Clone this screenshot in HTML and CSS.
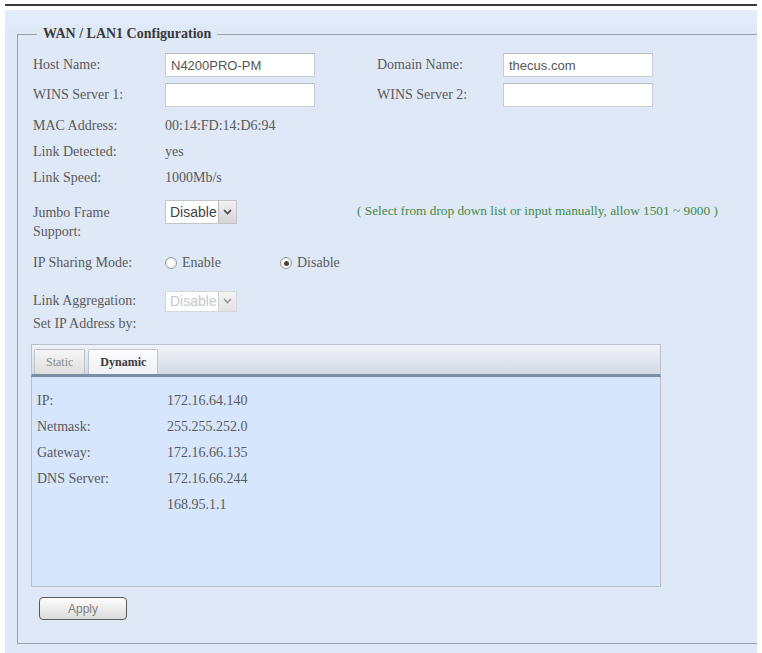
FILE: index.html
```html
<!DOCTYPE html>
<html lang="en">
<head>
    <meta charset="UTF-8">
    <title>WAN / LAN1 Configuration</title>
    <link rel="stylesheet" href="styles.css">
</head>
<body>
    <div class="frame">
        <div class="panel">
            <fieldset class="config">
                <legend>WAN / LAN1 Configuration</legend>

                <div class="row row-input">
                    <span class="label">Host Name:</span>
                    <span class="field"><input class="text" type="text" value="N4200PRO-PM"></span>
                    <span class="label label-right">Domain Name:</span>
                    <span class="field"><input class="text" type="text" value="thecus.com"></span>
                </div>
                <div class="row row-input">
                    <span class="label">WINS Server 1:</span>
                    <span class="field"><input class="text" type="text" value=""></span>
                    <span class="label label-right">WINS Server 2:</span>
                    <span class="field"><input class="text" type="text" value=""></span>
                </div>
                <div class="row row-mac">
                    <span class="label">MAC Address:</span>
                    <span class="value">00:14:FD:14:D6:94</span>
                </div>
                <div class="row">
                    <span class="label">Link Detected:</span>
                    <span class="value">yes</span>
                </div>
                <div class="row">
                    <span class="label">Link Speed:</span>
                    <span class="value">1000Mb/s</span>
                </div>
                <div class="row row-jumbo">
                    <span class="label label-wrap">Jumbo Frame Support:</span>
                    <span class="field field-combo">
                        <span class="combo">
                            <span class="combo-text">Disable</span>
                            <span class="combo-btn"><svg width="9" height="6" viewBox="0 0 9 6"><path d="M1 1 L4.5 4.5 L8 1" fill="none" stroke="#444" stroke-width="1.6"/></svg></span>
                        </span>
                    </span>
                    <span class="hint">( Select from drop down list or input manually, allow 1501 ~ 9000 )</span>
                </div>
                <div class="row row-radio">
                    <span class="label">IP Sharing Mode:</span>
                    <span class="field field-radio"><span class="radio"></span>Enable</span>
                    <span class="field"><span class="radio checked"></span>Disable</span>
                </div>
                <div class="row row-agg">
                    <span class="label">Link Aggregation:</span>
                    <span class="combo combo-disabled">
                        <span class="combo-text">Disable</span>
                        <span class="combo-btn"><svg width="9" height="6" viewBox="0 0 9 6"><path d="M1 1 L4.5 4.5 L8 1" fill="none" stroke="#999" stroke-width="1.6"/></svg></span>
                    </span>
                </div>
                <div class="row row-setip">
                    <span class="label">Set IP Address by:</span>
                </div>

                <div class="tabs">
                    <div class="tab-strip">
                        <span class="tab">Static</span>
                        <span class="tab active">Dynamic</span>
                    </div>
                    <div class="tab-body">
                        <div class="info-row"><span class="label">IP:</span><span class="value">172.16.64.140</span></div>
                        <div class="info-row"><span class="label">Netmask:</span><span class="value">255.255.252.0</span></div>
                        <div class="info-row"><span class="label">Gateway:</span><span class="value">172.16.66.135</span></div>
                        <div class="info-row"><span class="label">DNS Server:</span><span class="value">172.16.66.244</span></div>
                        <div class="info-row"><span class="label"></span><span class="value">168.95.1.1</span></div>
                    </div>
                </div>

                <button class="apply" type="button">Apply</button>
            </fieldset>
        </div>
    </div>
</body>
</html>
```

FILE: styles.css
```css
body {
    margin: 0;
    background-color: #fff;
    font-family: "Liberation Serif", "Times New Roman", serif;
    font-size: 14px;
    color: #5a5a5a;
}
.frame {
    margin: 4px 5px 0 5px;
    width: 752px;
    border-top: 2px solid #3c3c3c;
}
.panel {
    margin-top: 4px;
    height: 628px;
    padding-top: 16px;
    background: linear-gradient(to bottom, #e3eefa 0, #dfe8f7 20px);
}
.config {
    margin: 0 0 0 12px;
    padding: 11px 0 23px 15px;
    border: 1px solid #98a1ab;
    border-right: 0;
    min-width: 0;
}
.config legend {
    margin-left: 4px;
    padding: 0 6px;
    font-weight: bold;
    font-size: 14px;
    color: #3a3a3a;
    line-height: 16px;
}
.row {
    display: flex;
    align-items: center;
    height: 26px;
}
.row-input {
    height: 24px;
    margin-bottom: 6px;
}
.row-mac {
    margin-top: 0;
}
.label {
    width: 132px;
    flex: none;
}
.label-right {
    width: 126px;
}
.label-wrap {
    width: 118px;
    margin-right: 14px;
    line-height: 19px;
    align-self: flex-start;
    padding-top: 3px;
}
.field {
    width: 212px;
    flex: none;
    display: flex;
    align-items: center;
}
.text {
    box-sizing: border-box;
    width: 150px;
    height: 24px;
    margin: 0;
    padding: 0 5px;
    border: 1px solid #c9cdd2;
    border-top-color: #b9bdc2;
    background-color: #fff;
    font-family: "Liberation Sans", Arial, sans-serif;
    font-size: 13px;
    color: #555;
}
.row-jumbo {
    height: 44px;
    align-items: flex-start;
    margin-top: 9px;
}
.field-combo {
    width: 192px;
}
.combo {
    box-sizing: border-box;
    width: 72px;
    height: 24px;
    display: flex;
    border: 1px solid #c2c6cb;
    background-color: #fff;
    font-family: "Liberation Sans", Arial, sans-serif;
    font-size: 14px;
    color: #444;
}
.combo-text {
    width: 51px;
    padding-left: 4px;
    overflow: hidden;
    white-space: nowrap;
    line-height: 22px;
}
.combo-btn {
    width: 18px;
    display: flex;
    align-items: center;
    justify-content: center;
    border-left: 1px solid #bbb;
    background: linear-gradient(to bottom, #f2f2f2, #d4d4d4);
}
.hint {
    margin-top: 3px;
    font-size: 13.3px;
    color: #3f8a46;
}
.row-radio {
    height: 30px;
    margin-top: 4px;
}
.field-radio {
    width: 115px;
}
.radio {
    box-sizing: border-box;
    width: 12px;
    height: 12px;
    margin-right: 5px;
    border: 1px solid #9a9a9a;
    border-radius: 50%;
    background: radial-gradient(circle, #fff 40%, #e2e2e2 100%);
    display: flex;
    align-items: center;
    justify-content: center;
}
.radio.checked::after {
    content: "";
    width: 5px;
    height: 5px;
    border-radius: 50%;
    background-color: #444;
}
.row-agg {
    height: 26px;
    margin-top: 10px;
}
.combo-disabled {
    height: 21px;
    border-color: #d4d8dd;
    color: #c4c8cc;
}
.combo-disabled .combo-text {
    line-height: 19px;
}
.combo-disabled .combo-btn {
    border-left-color: #d0d0d0;
    background: linear-gradient(to bottom, #f4f4f4, #e2e2e2);
}
.row-setip {
    height: 20px;
}
.tabs {
    margin: 10px 0 0 -2px;
    width: 630px;
}
.tab-strip {
    height: 29px;
    display: flex;
    align-items: flex-end;
    gap: 3px;
    padding-left: 2px;
    border: 1px solid #b8c1cc;
    border-bottom: 3px solid #7c8ea3;
    background: linear-gradient(to bottom, #f0f3f7, #d3dbe5);
}
.tab {
    height: 24px;
    padding: 0 11px;
    display: flex;
    align-items: center;
    border: 1px solid #bcc3cb;
    border-bottom: 0;
    border-radius: 2px 2px 0 0;
    background: linear-gradient(to bottom, #f6f6f6, #dedede);
    font-size: 12px;
    color: #8a8a8a;
}
.tab.active {
    padding: 0 11px;
    background: linear-gradient(to bottom, #fbfcfd, #eef1f5);
    font-weight: bold;
    color: #3a3a3a;
}
.tab-body {
    height: 198px;
    padding: 11px 0 0 5px;
    border: 1px solid #b3bfcd;
    border-top: 0;
    background-color: #d6e6fc;
}
.info-row {
    display: flex;
    align-items: center;
    height: 26px;
}
.info-row .label {
    width: 130px;
}
.apply {
    margin: 10px 0 0 6px;
    width: 88px;
    height: 23px;
    padding: 0;
    border: 1px solid #5a5a5a;
    border-radius: 4px;
    background: linear-gradient(to bottom, #fdfdfd, #dcdcdc);
    font-family: "Liberation Sans", Arial, sans-serif;
    font-size: 12px;
    color: #808080;
    cursor: pointer;
}
```
